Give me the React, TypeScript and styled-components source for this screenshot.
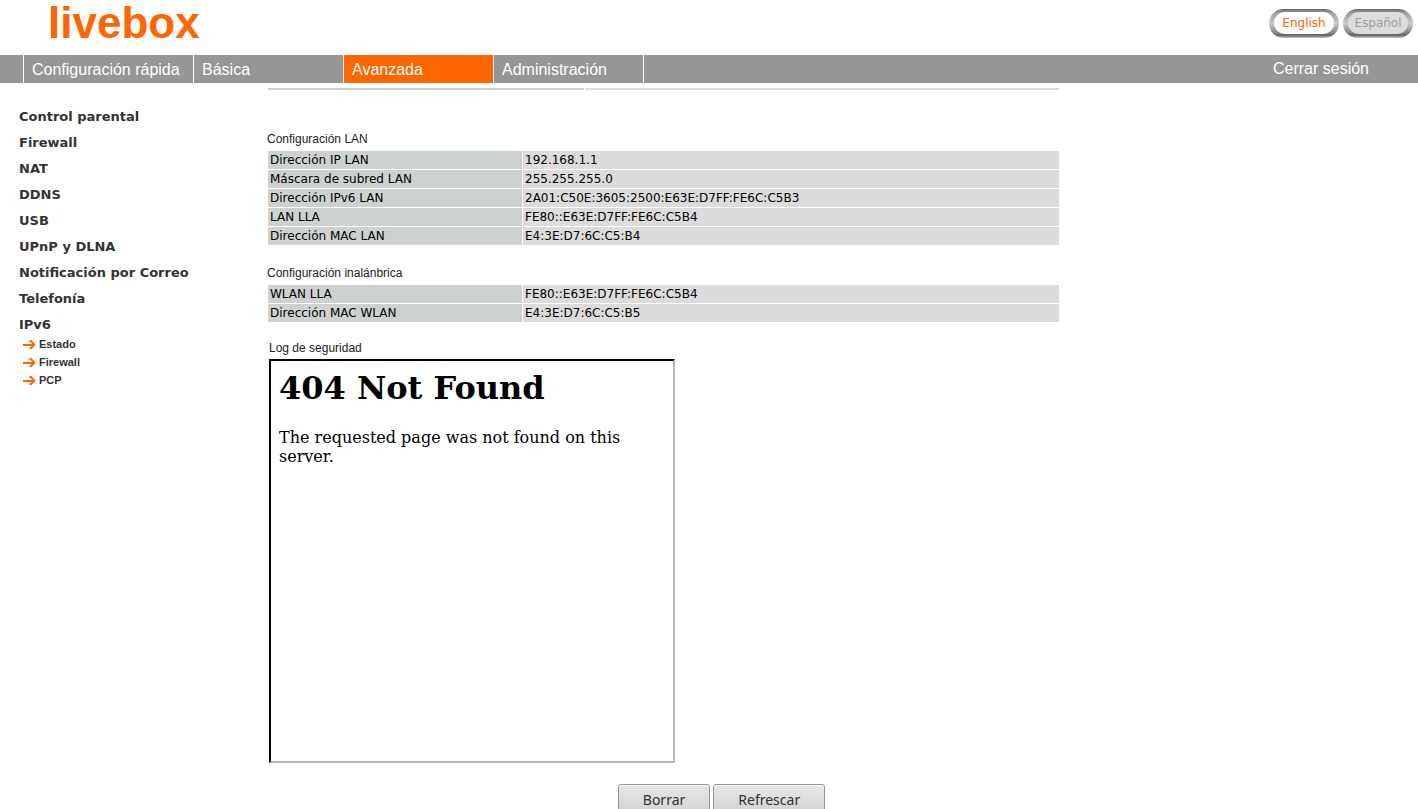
import React from "react";
import styled, { createGlobalStyle } from "styled-components";

const GlobalStyle = createGlobalStyle`
  * { box-sizing: border-box; }
  body {
    margin: 0;
    background: #fff;
    color: #000;
    font-family: "DejaVu Sans", Verdana, sans-serif;
    font-size: 12px;
  }
`;

const arial = `"Liberation Sans", Arial, sans-serif`;

const Header = styled.header`
  display: flex;
  justify-content: space-between;
  align-items: flex-start;
  height: 55px;
  padding: 0 5px 0 48px;
`;

const Logo = styled.h1`
  margin: 0;
  font: bold 44px/45px ${arial};
  color: #ff6600;
`;

const Languages = styled.div`
  display: flex;
  gap: 4px;
  padding-top: 9px;
`;

const LanguageButton = styled.button<{ $active?: boolean }>`
  display: flex;
  width: 70px;
  height: 29px;
  padding: 3px 5px 4px;
  border: 0;
  border-radius: 15px;
  background: linear-gradient(#686868, #a0a0a0 14%, #c8c8c8 50%, #8c8c8c 80%, #606060 90%, #c8c8c8);
  color: ${(p) => (p.$active ? "#ff6600" : "#a0a0a0")};
  font: 12px/22px "DejaVu Sans", Verdana, sans-serif;
`;

const LanguageFace = styled.span<{ $active?: boolean }>`
  flex: 1;
  height: 22px;
  border-radius: 11px;
  background: ${(p) => (p.$active ? "#fff" : "#dcdcdc")};
`;

const NavBar = styled.nav`
  display: flex;
  height: 28px;
  padding-left: 23px;
  background: #969696;
  font: 16px/28px ${arial};
`;

const NavItem = styled.a<{ $wide?: boolean; $active?: boolean }>`
  width: ${(p) => (p.$wide ? "170px" : "150px")};
  padding: 1px 0 0 8px;
  border-left: 1px solid #fff;
  background: ${(p) => (p.$active ? "#ff6600" : "transparent")};
  color: #fff;
  text-decoration: none;
`;

const NavEnd = styled.div`
  flex: 1;
  padding-right: 49px;
  border-left: 1px solid #fff;
  text-align: right;
`;

const LogoutLink = styled.a`
  color: #fff;
  text-decoration: none;
`;

const Page = styled.div`
  display: flex;
`;

const Sidebar = styled.nav`
  flex: 0 0 267px;
  padding: 21px 0 0 19px;
`;

const MenuList = styled.ul`
  margin: 0;
  padding: 0;
  list-style: none;
`;

const MenuLink = styled.a`
  display: block;
  font-size: 13px;
  font-weight: bold;
  line-height: 26px;
  color: #333;
  text-decoration: none;
`;

const SubLink = styled.a`
  display: flex;
  align-items: center;
  gap: 3px;
  height: 18px;
  padding-left: 4px;
  font: bold 11px/18px ${arial};
  color: #333;
  text-decoration: none;
`;

const SubList = styled(MenuList)`
  margin-top: -3px;
`;

const Main = styled.main`
  flex: 0 1 909px;
  min-width: 0;
  padding-top: 5px;
`;

const Divider = styled.div`
  display: grid;
  grid-template-columns: 2fr 3fr;
  gap: 1px;
  max-width: 792px;
  height: 2px;
  padding-left: 1px;
  margin-bottom: 40px;

  &::before {
    content: "";
    background: #cdd2d0;
  }
  &::after {
    content: "";
    background: #dcdcdc;
  }
`;

const DataTable = styled.table`
  width: 100%;
  max-width: 793px;
  margin-bottom: 18px;
  border-spacing: 1px;
  table-layout: fixed;
`;

const Caption = styled.caption`
  height: 20px;
  font: 12px/18px ${arial};
  color: #222;
  text-align: left;
`;

const Label = styled.th`
  width: 254px;
  height: 18px;
  padding: 0 2px;
  background: #cdd2d0;
  font-weight: normal;
  line-height: 18px;
  text-align: left;
`;

const Value = styled.td`
  padding: 0 2px;
  background: #dcdcdc;
  line-height: 18px;
`;

const LogTitle = styled.h2`
  margin: -2px 0 0 2px;
  padding-bottom: 2px;
  font: 12px/18px ${arial};
  color: #222;
`;

const LogFrame = styled.section`
  max-width: 406px;
  min-height: 404px;
  margin-left: 2px;
  padding: 8px;
  border: 2px solid;
  border-color: #000 #b8b8b8 #b8b8b8 #000;
  font: 16px/19px "DejaVu Serif", serif;
`;

const ErrorTitle = styled.h1`
  margin: 0 0 21px;
  font-size: 32px;
  line-height: 38px;
`;

const ErrorText = styled.p`
  margin: 0;
`;

const Actions = styled.div`
  display: flex;
  justify-content: center;
  gap: 3px;
  padding-top: 21px;
`;

const ActionButton = styled.button`
  height: 32px;
  padding: 0 24px;
  border: 1px solid #949692;
  border-radius: 3px;
  background: linear-gradient(#e8e8e7, #d0d0cf);
  box-shadow: inset 0 1px 0 #fff;
  color: #2e3436;
  font: 14px/20px "Noto Sans", sans-serif;
`;

const Arrow = () => (
  <svg width="13" height="9" viewBox="0 0 13 9" fill="none" stroke="#ff6600" strokeWidth="2" aria-hidden="true">
    <path d="M0 5H11M6.5 1H8L11.3 4.8L8 8.3H6.5" />
  </svg>
);

type Entry = [string, string];

const lanRows: Entry[] = [
  ["Dirección IP LAN", "192.168.1.1"],
  ["Máscara de subred LAN", "255.255.255.0"],
  ["Dirección IPv6 LAN", "2A01:C50E:3605:2500:E63E:D7FF:FE6C:C5B3"],
  ["LAN LLA", "FE80::E63E:D7FF:FE6C:C5B4"],
  ["Dirección MAC LAN", "E4:3E:D7:6C:C5:B4"],
];

const wlanRows: Entry[] = [
  ["WLAN LLA", "FE80::E63E:D7FF:FE6C:C5B4"],
  ["Dirección MAC WLAN", "E4:3E:D7:6C:C5:B5"],
];

const menu = [
  "Control parental",
  "Firewall",
  "NAT",
  "DDNS",
  "USB",
  "UPnP y DLNA",
  "Notificación por Correo",
  "Telefonía",
  "IPv6",
];

const Settings = ({ title, rows }: { title: string; rows: Entry[] }) => (
  <DataTable>
    <Caption>{title}</Caption>
    <tbody>
      {rows.map(([label, value]) => (
        <tr key={label}>
          <Label scope="row">{label}</Label>
          <Value>{value}</Value>
        </tr>
      ))}
    </tbody>
  </DataTable>
);

const Language = ({ name, active }: { name: string; active?: boolean }) => (
  <LanguageButton type="button" $active={active}>
    <LanguageFace $active={active}>{name}</LanguageFace>
  </LanguageButton>
);

export default function App() {
  return (
    <>
      <GlobalStyle />
      <Header>
        <Logo>livebox</Logo>
        <Languages>
          <Language name="English" active />
          <Language name="Español" />
        </Languages>
      </Header>
      <NavBar>
        <NavItem href="#rapida" $wide>Configuración rápida</NavItem>
        <NavItem href="#basica">Básica</NavItem>
        <NavItem href="#avanzada" $active>Avanzada</NavItem>
        <NavItem href="#administracion">Administración</NavItem>
        <NavEnd>
          <LogoutLink href="#salir">Cerrar sesión</LogoutLink>
        </NavEnd>
      </NavBar>
      <Page>
        <Sidebar>
          <MenuList>
            {menu.map((item) => (
              <li key={item}>
                <MenuLink href="#menu">{item}</MenuLink>
              </li>
            ))}
          </MenuList>
          <SubList>
            {["Estado", "Firewall", "PCP"].map((item) => (
              <li key={item}>
                <SubLink href="#ipv6">
                  <Arrow />
                  {item}
                </SubLink>
              </li>
            ))}
          </SubList>
        </Sidebar>
        <Main>
          <Divider />
          <Settings title="Configuración LAN" rows={lanRows} />
          <Settings title="Configuración inalánbrica" rows={wlanRows} />
          <LogTitle>Log de seguridad</LogTitle>
          <LogFrame>
            <ErrorTitle>404 Not Found</ErrorTitle>
            <ErrorText>The requested page was not found on this server.</ErrorText>
          </LogFrame>
          <Actions>
            <ActionButton type="button">Borrar</ActionButton>
            <ActionButton type="button">Refrescar</ActionButton>
          </Actions>
        </Main>
      </Page>
    </>
  );
}
